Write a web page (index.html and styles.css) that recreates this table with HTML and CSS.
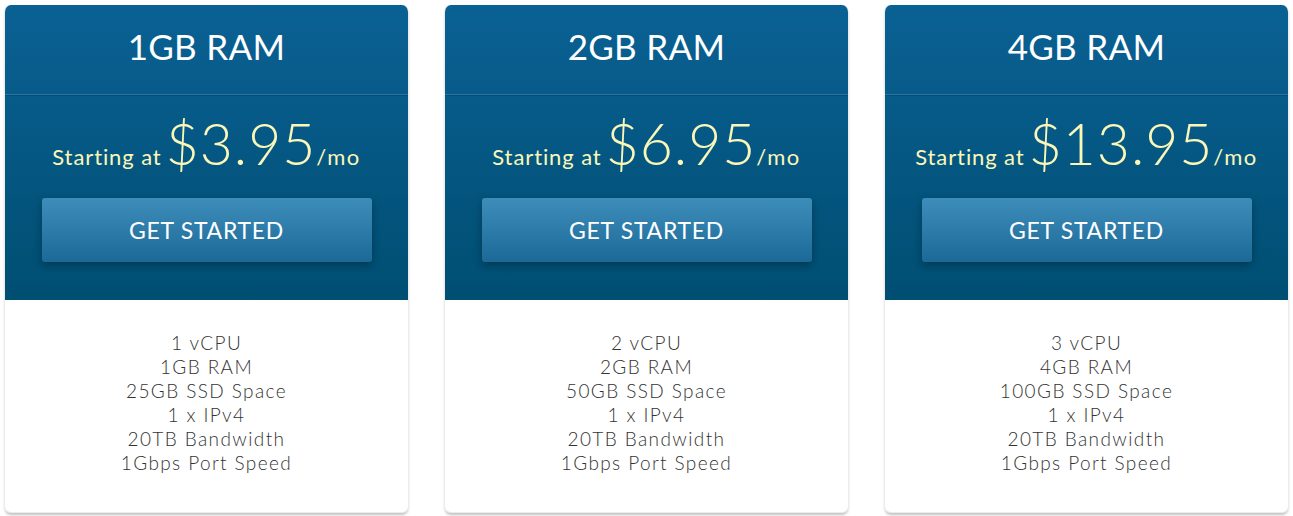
FILE: index.html
```html
<!DOCTYPE html>
<html lang="en">
<head>
    <meta charset="UTF-8">
    <title>VPS Plans</title>
    <link rel="stylesheet" href="styles.css">
</head>
<body>
    <div class="plans">
        <div class="plan">
            <div class="plan-top">
                <div class="plan-name">1GB RAM</div>
                <div class="plan-price">
                    <span class="from">Starting at</span>
                    <span class="amount">$3.95</span><span class="per">/mo</span>
                </div>
                <a class="btn" href="#">GET STARTED</a>
            </div>
            <ul class="features">
                <li>1 vCPU</li>
                <li>1GB RAM</li>
                <li>25GB SSD Space</li>
                <li>1 x IPv4</li>
                <li>20TB Bandwidth</li>
                <li>1Gbps Port Speed</li>
            </ul>
        </div>

        <div class="plan">
            <div class="plan-top">
                <div class="plan-name">2GB RAM</div>
                <div class="plan-price">
                    <span class="from">Starting at</span>
                    <span class="amount">$6.95</span><span class="per">/mo</span>
                </div>
                <a class="btn" href="#">GET STARTED</a>
            </div>
            <ul class="features">
                <li>2 vCPU</li>
                <li>2GB RAM</li>
                <li>50GB SSD Space</li>
                <li>1 x IPv4</li>
                <li>20TB Bandwidth</li>
                <li>1Gbps Port Speed</li>
            </ul>
        </div>

        <div class="plan">
            <div class="plan-top">
                <div class="plan-name">4GB RAM</div>
                <div class="plan-price">
                    <span class="from">Starting at</span>
                    <span class="amount">$13.95</span><span class="per">/mo</span>
                </div>
                <a class="btn" href="#">GET STARTED</a>
            </div>
            <ul class="features">
                <li>3 vCPU</li>
                <li>4GB RAM</li>
                <li>100GB SSD Space</li>
                <li>1 x IPv4</li>
                <li>20TB Bandwidth</li>
                <li>1Gbps Port Speed</li>
            </ul>
        </div>
    </div>
</body>
</html>
```

FILE: styles.css
```css
:root {
    --blue-top: #0a6194;
    --blue-bottom: #004e72;
    --price: #fbf7b8;
    --text: #333333;
}

body {
    margin: 0;
    background: #ffffff;
    font-family: Lato, "Open Sans", sans-serif;
}

.plans {
    display: grid;
    grid-template-columns: repeat(3, 405px);
    gap: 35px;
    padding: 5px 4px;
}

.plan {
    border-radius: 7px;
    background: #ffffff;
    border: 1px solid #ececec;
    border-top: none;
    box-shadow: 0 3px 3px -1px rgba(0,0,0,0.25);
    overflow: hidden;
    height: 508px;
    box-sizing: border-box;
}

.plan-top {
    background: linear-gradient(to bottom, var(--blue-top), var(--blue-bottom));
    height: 295px;
    display: flex;
    flex-direction: column;
    align-items: center;
    margin: 0 -1px;
}

.plan-name {
    width: 100%;
    height: 89px;
    line-height: 82px;
    text-align: center;
    color: #ffffff;
    font-size: 35px;
    letter-spacing: 0.3px;
    border-bottom: 1px solid #2a76a3;
    box-shadow: 0 1px 0 rgba(0,0,0,0.15);
}

.plan-price {
    margin-top: 14px;
    color: var(--price);
    white-space: nowrap;
}

.from {
    font-size: 22px;
    letter-spacing: 0.9px;
}

.amount {
    font-size: 57px;
    font-weight: 300;
    letter-spacing: 1px;
}

.per {
    font-size: 22px;
    letter-spacing: 1.5px;
}

.btn {
    margin-top: 21px;
    width: 330px;
    height: 64px;
    line-height: 64px;
    text-align: center;
    color: #ffffff;
    font-size: 23px;
    letter-spacing: 0.7px;
    text-decoration: none;
    border-radius: 3px;
    background: linear-gradient(to bottom, #3d8dba, #1c6997);
    box-shadow: 0 3px 8px rgba(0,0,0,0.3);
}

.features {
    list-style: none;
    margin: 0;
    padding: 31px 0 0;
    text-align: center;
    color: var(--text);
    font-size: 19px;
    font-weight: 300;
    line-height: 24px;
    letter-spacing: 1.4px;
}
```
